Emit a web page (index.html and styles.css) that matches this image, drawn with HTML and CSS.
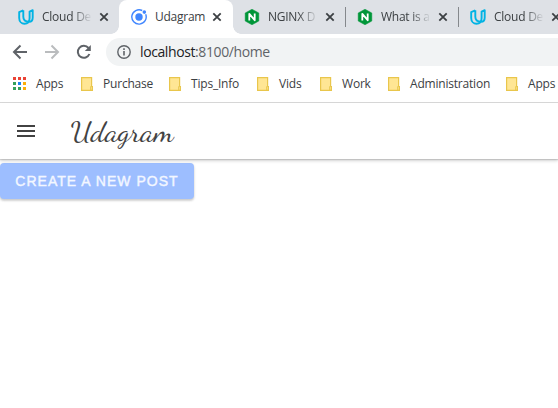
FILE: index.html
```html
<!DOCTYPE html>
<html lang="en">
<head>
<meta charset="utf-8">
<title>Udagram</title>
<link rel="stylesheet" href="styles.css">
</head>
<body>
<svg class="defs" width="0" height="0">
  <symbol id="udacity" viewBox="0 0 16 16"><path d="M5.3 1.3 1.2 3.1v5.8c0 3.5 2.4 5.8 5.2 5.8 3.3 0 5.2-2.4 5.2-5.8V2.6l3.1-1.4v7.3c0 2.8-1.5 4.3-3.6 4.3-3.5 0-5.8-1.8-5.8-5V1.3" fill="none" stroke="#02b3e4" stroke-width="1.9" stroke-linejoin="round"/></symbol>
  <symbol id="nginx" viewBox="0 0 16 16"><path d="M8 .2 14.8 4v8L8 15.8 1.2 12V4z" fill="#009639" stroke="#009639" stroke-width=".5" stroke-linejoin="round"/><path d="M5.3 11.5V4.8l5.4 6.4V4.5" fill="none" stroke="#fff" stroke-width="1.8" stroke-linejoin="round"/></symbol>
  <symbol id="ionic" viewBox="0 0 16 16"><circle cx="8" cy="8" r="3.7" fill="#4086ff"/><path d="M11.2 1.5A7.2 7.2 0 1 0 14.7 5.3" fill="none" stroke="#4086ff" stroke-width="1.4"/><circle cx="13.3" cy="3.1" r="1.8" fill="#4086ff"/></symbol>
  <symbol id="close" viewBox="0 0 10 10"><path d="m1.3 1.3 7.4 7.4m0-7.4L1.3 8.7" stroke="#3c4043" stroke-width="1.8"/></symbol>
  <symbol id="folder" viewBox="0 0 12 14"><path d="M.6.6h10v9.1h.8v3.7H.6z" fill="#ffe694" stroke="#e9c64c" stroke-width="1.2"/><path d="M9.5 13V9.6h1.6V13z" fill="#ffe694" stroke="#e9c64c" stroke-width=".8"/></symbol>
</svg>
<nav class="tabs">
  <div class="tab"><svg class="fav"><use href="#udacity"/></svg><span class="title fade">Cloud De</span><svg class="close"><use href="#close"/></svg></div>
  <div class="tab active"><svg class="fav"><use href="#ionic"/></svg><span class="title">Udagram</span><svg class="close"><use href="#close"/></svg></div>
  <div class="tab"><svg class="fav"><use href="#nginx"/></svg><span class="title fade">NGINX D</span><svg class="close"><use href="#close"/></svg></div>
  <div class="tab ruled"><svg class="fav"><use href="#nginx"/></svg><span class="title fade">What is a</span><svg class="close"><use href="#close"/></svg></div>
  <div class="tab ruled"><svg class="fav"><use href="#udacity"/></svg><span class="title fade">Cloud De</span><svg class="close"><use href="#close"/></svg></div>
</nav>
<div class="toolbar">
  <svg class="nav" viewBox="0 0 16 16"><path d="M15 8H2m6.5-6.5L2 8l6.5 6.5" fill="none" stroke="#5f6368" stroke-width="2"/></svg>
  <svg class="nav" viewBox="0 0 16 16"><path d="M1 8h13M7.5 1.5 14 8l-6.5 6.5" fill="none" stroke="#babcbe" stroke-width="2"/></svg>
  <svg class="nav" viewBox="0 0 16 16"><path d="M13.4 10A6 6 0 1 1 12.5 4" fill="none" stroke="#5f6368" stroke-width="2"/><path d="M14.8 1v6H8.8z" fill="#5f6368"/></svg>
  <div class="address">
    <svg class="info" viewBox="0 0 14 14"><circle cx="7" cy="7" r="6.2" fill="none" stroke="#5f6368" stroke-width="1.4"/><path d="M7 6v4.5M7 3.3v1.6" stroke="#5f6368" stroke-width="1.6"/></svg>
    <span class="url"><b>localhost</b>:8100/home</span>
  </div>
</div>
<div class="bookmarks">
  <span class="mark apps"><svg class="grid" viewBox="0 0 13 13" shape-rendering="crispEdges"><path d="M0 0h3v3H0zM5 0h3v3H5zM10 0h3v3h-3z" fill="#ea4335"/><path d="M0 5h3v3H0zM0 10h3v3H0zM5 10h3v3H5z" fill="#34a05a"/><path d="M5 5h3v3H5z" fill="#1a82f0"/><path d="M10 5h3v3h-3zM10 10h3v3h-3z" fill="#fbae08"/></svg><span>Apps</span></span>
  <span class="mark purchase"><svg class="folder"><use href="#folder"/></svg><span>Purchase</span></span>
  <span class="mark tips"><svg class="folder"><use href="#folder"/></svg><span>Tips_Info</span></span>
  <span class="mark vids"><svg class="folder"><use href="#folder"/></svg><span>Vids</span></span>
  <span class="mark work"><svg class="folder"><use href="#folder"/></svg><span>Work</span></span>
  <span class="mark admin"><svg class="folder"><use href="#folder"/></svg><span>Administration</span></span>
  <span class="mark last"><svg class="folder"><use href="#folder"/></svg><span>Apps</span></span>
</div>
<header class="header">
  <svg class="menu" viewBox="0 0 18 12" shape-rendering="crispEdges"><path d="M0 0h18v2H0zM0 5h18v2H0zM0 10h18v2H0z" fill="#424242"/></svg>
  <svg class="brand" viewBox="0 0 108 40"><text x="1.5" y="30" textLength="103" lengthAdjust="spacingAndGlyphs">Udagram</text></svg>
</header>
<main><button class="create" disabled>CREATE A NEW POST</button></main>
</body>
</html>
```
FILE: styles.css
```css
* { box-sizing: border-box; }
body { margin: 0; width: 558px; height: 408px; overflow: hidden; background: #fff; font: 12px/16px "Segoe UI", "Open Sans", sans-serif; color: #3c4043; }
svg { display: block; flex: none; }
.defs { position: absolute; }
.tabs { display: flex; height: 34px; padding-left: 6px; overflow: hidden; background: #dee1e6; }
.tab { position: relative; flex: none; display: flex; align-items: center; width: 113px; padding-left: 12px; }
.fav { width: 16px; height: 16px; margin-right: 8px; }
.title { width: 50px; margin-right: 7px; white-space: nowrap; letter-spacing: -.25px; }
.fade { -webkit-mask-image: linear-gradient(to right, #000 60%, transparent); mask-image: linear-gradient(to right, #000 60%, transparent); }
.close { width: 10px; height: 10px; }
.active { width: 114px; margin-right: -1px; background: #fff; border-radius: 8px 8px 0 0; }
.active::before, .active::after { content: ""; position: absolute; bottom: 0; width: 8px; height: 8px; }
.active::before { left: -8px; background: radial-gradient(circle at 0 0, transparent 7.5px, #fff 8px); }
.active::after { right: -8px; background: radial-gradient(circle at 100% 0, transparent 7.5px, #fff 8px); }
.ruled::before { content: ""; position: absolute; left: 0; top: 7px; width: 1px; height: 20px; background: #85888c; }
.toolbar { display: flex; align-items: center; height: 36px; padding-left: 12px; }
.nav { width: 16px; height: 16px; margin-right: 16px; }
.nav:nth-child(3) { margin-right: 14px; }
.address { flex: 1; display: flex; align-items: center; height: 28px; padding-left: 11px; border-radius: 14px 0 0 14px; background: #f1f3f4; }
.info { width: 14px; height: 14px; margin-right: 9px; }
.url { font-size: 14px; letter-spacing: -.4px; color: #5f6368; }
.url b { font-weight: 400; color: #202124; }
.bookmarks { display: flex; align-items: center; height: 33px; padding: 0 0 5px 13px; border-bottom: 1px solid #d8d8d8; white-space: nowrap; letter-spacing: -.2px; }
.mark { display: flex; flex: none; align-items: center; width: 88px; }
.grid { width: 13px; height: 13px; margin-right: 10px; }
.folder { width: 12px; height: 14px; margin-right: 10px; }
.apps { width: 68px; }
.vids { width: 63px; }
.work { width: 68px; }
.admin { width: 118px; }
.last { width: 52px; }
.header { position: relative; display: flex; align-items: center; height: 56px; padding-left: 17px; background: #fff; box-shadow: 0 1px 1px rgba(0,0,0,.12), 0 2px 3px rgba(0,0,0,.16); }
.menu { width: 18px; height: 12px; margin-right: 34px; }
.brand { width: 108px; height: 40px; }
.brand text { font: 400 28px "Dancing Script", cursive; fill: #424242; }
main { padding-top: 4px; }
.create { display: block; width: 194px; height: 36px; padding: 0; border: 0; border-radius: 4px; background: #9dbeff; color: #f3f7ff; font: 14px "Liberation Sans", sans-serif; letter-spacing: 1.02px; -webkit-text-stroke: .4px #f3f7ff; white-space: nowrap; box-shadow: 0 2px 2px rgba(0,0,0,.12), 0 1px 3px rgba(0,0,0,.12); }
```
